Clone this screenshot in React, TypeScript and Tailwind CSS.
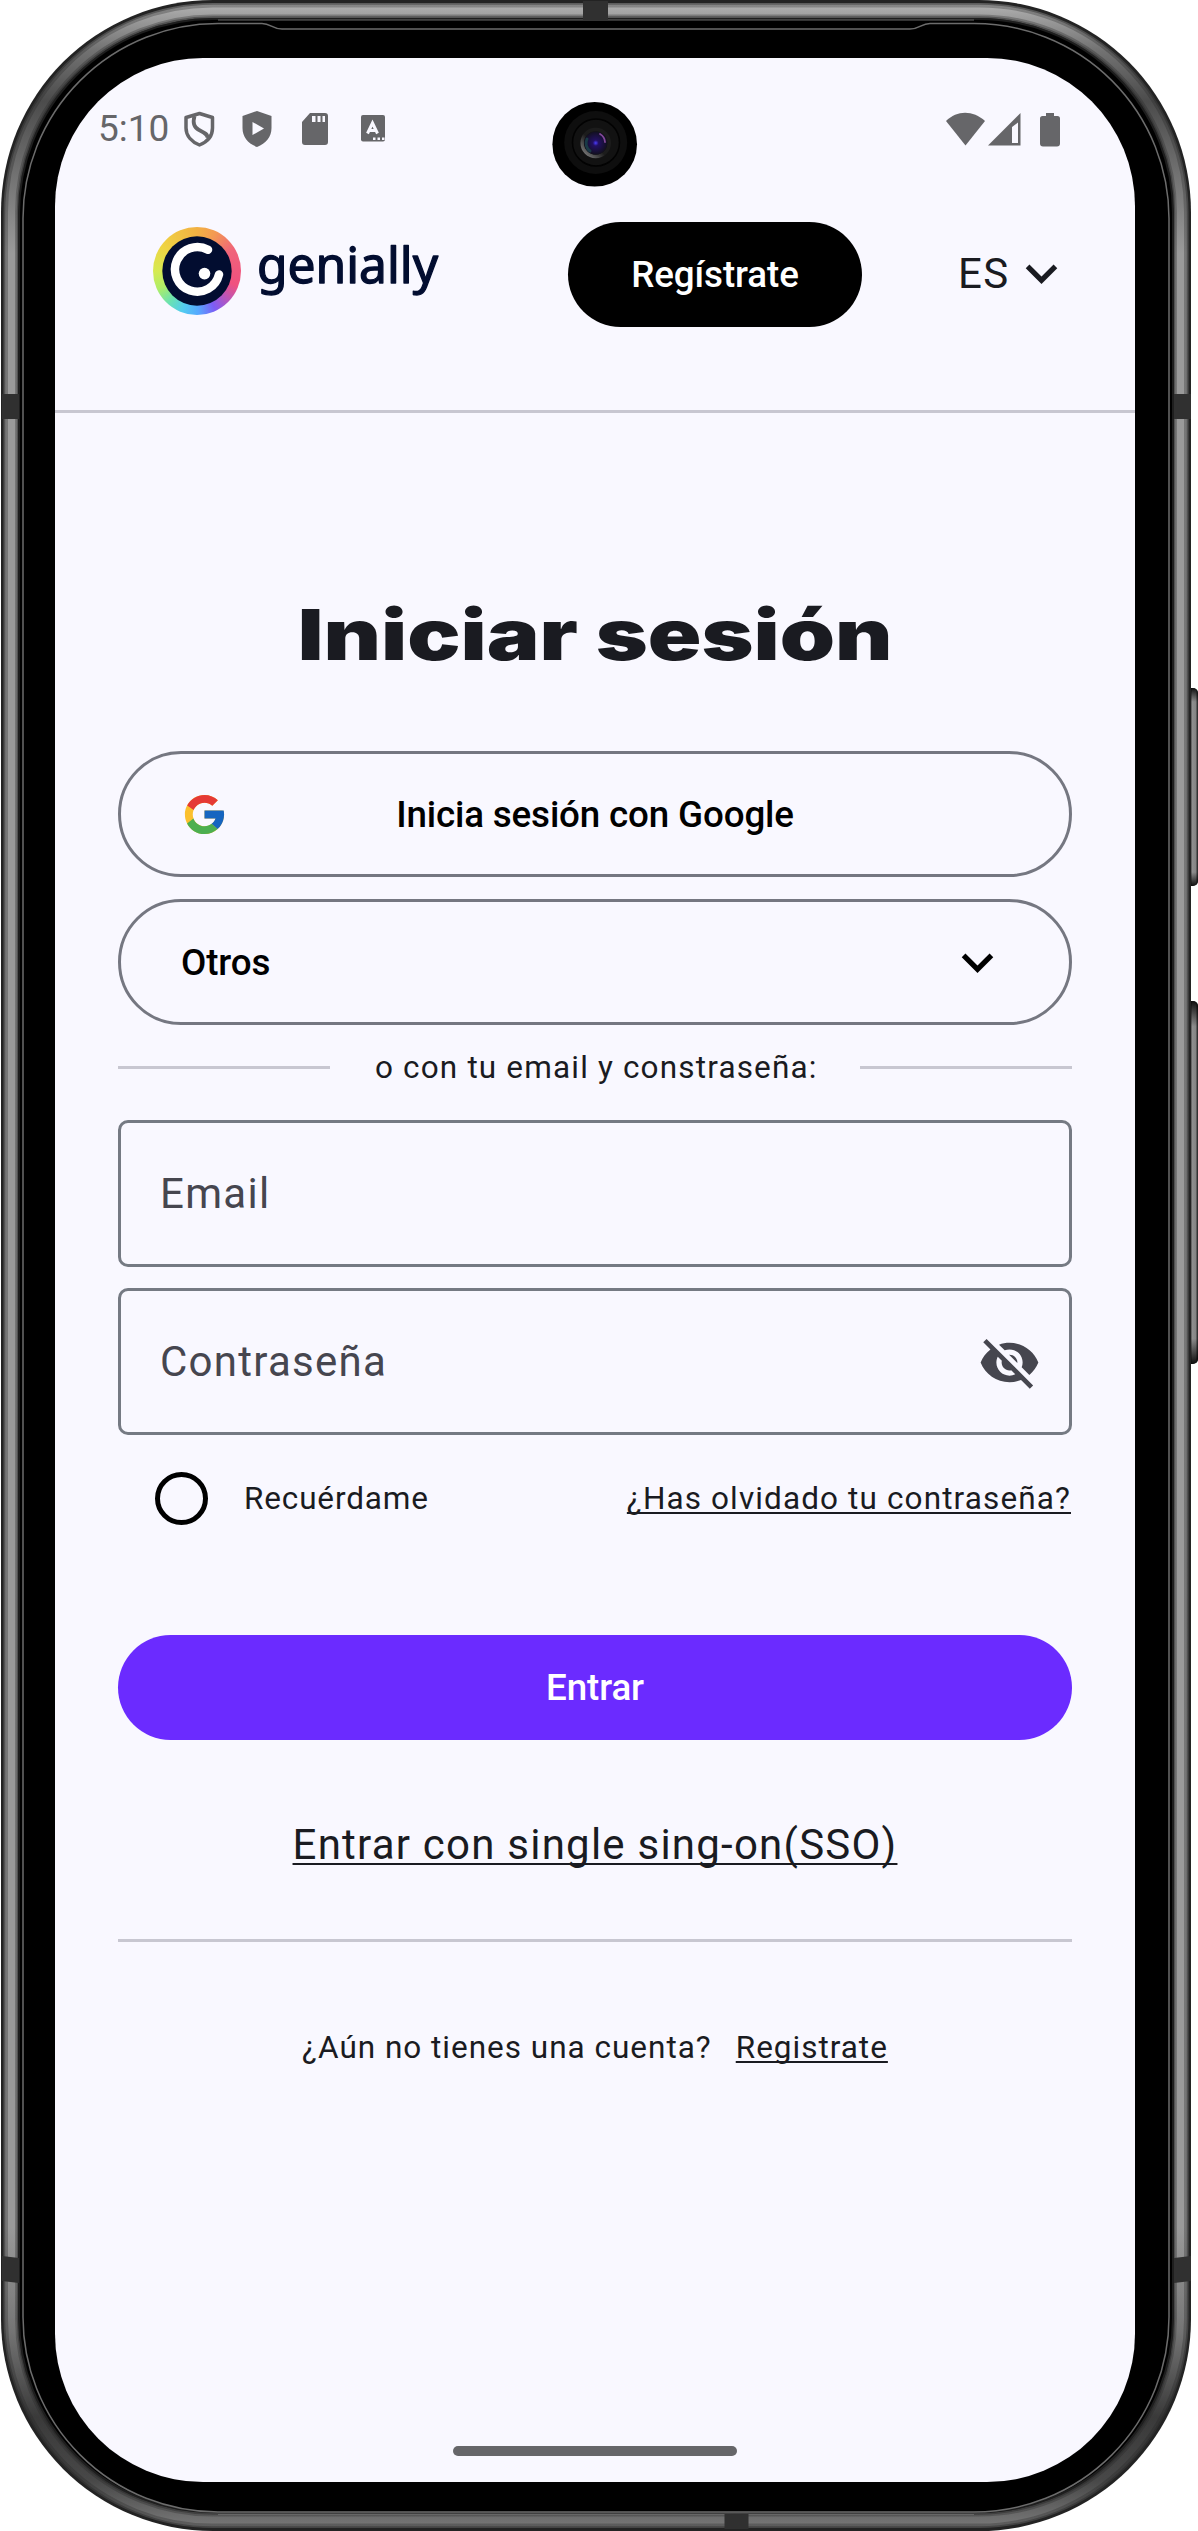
import React from "react";

/* Metallic phone body drawn behind the screen */
function DeviceFrame() {
  return (
    <svg className="absolute inset-0" width="1198" height="2531" viewBox="0 0 1198 2531" aria-hidden="true">
      <defs>
        <linearGradient id="metal" x1="0" y1="0" x2="0" y2="2531" gradientUnits="userSpaceOnUse">
          <stop offset="0" stopColor="#b8b8b8" />
          <stop offset="0.006" stopColor="#a0a0a0" />
          <stop offset="0.02" stopColor="#727272" />
          <stop offset="0.04" stopColor="#4c4c4c" />
          <stop offset="0.065" stopColor="#6c6c6c" />
          <stop offset="0.1" stopColor="#9a9a9a" />
          <stop offset="0.88" stopColor="#9a9a9a" />
          <stop offset="0.92" stopColor="#767676" />
          <stop offset="0.955" stopColor="#3a3a3a" />
          <stop offset="0.98" stopColor="#484848" />
          <stop offset="1" stopColor="#7c7c7c" />
        </linearGradient>
        <linearGradient id="key" x1="1190" y1="0" x2="1198" y2="0" gradientUnits="userSpaceOnUse">
          <stop offset="0" stopColor="#222" />
          <stop offset="0.3" stopColor="#8f8f8f" />
          <stop offset="0.7" stopColor="#858585" />
          <stop offset="1" stopColor="#1c1c1c" />
        </linearGradient>
        <linearGradient id="keyEnds" x1="0" y1="0" x2="0" y2="1">
          <stop offset="0" stopColor="#000" stopOpacity="0.9" />
          <stop offset="0.07" stopColor="#000" stopOpacity="0" />
          <stop offset="0.93" stopColor="#000" stopOpacity="0" />
          <stop offset="1" stopColor="#000" stopOpacity="0.9" />
        </linearGradient>
        <radialGradient id="lens">
          <stop offset="0" stopColor="#4a3cff" />
          <stop offset="0.25" stopColor="#231064" />
          <stop offset="1" stopColor="#12101f" />
        </radialGradient>
        <linearGradient id="lensRim" x1="0" y1="1" x2="1" y2="0">
          <stop offset="0" stopColor="#8a8a8a" />
          <stop offset="0.45" stopColor="#1c1c1c" />
          <stop offset="1" stopColor="#1c1c1c" />
        </linearGradient>
      </defs>
      <rect x="1180" y="688" width="18" height="198" rx="5" fill="url(#key)" />
      <rect x="1180" y="688" width="18" height="198" rx="5" fill="url(#keyEnds)" />
      <rect x="1180" y="1001" width="18" height="363" rx="5" fill="url(#key)" />
      <rect x="1180" y="1001" width="18" height="363" rx="5" fill="url(#keyEnds)" />
      <rect x="1" y="0" width="1190" height="2531" rx="212" fill="#232323" />
      <rect x="11" y="10.500" width="1170" height="2510" rx="202" fill="none" stroke="url(#metal)" strokeOpacity="0.4" strokeWidth="15" />
      <rect x="11" y="10.500" width="1170" height="2510" rx="202" fill="none" stroke="url(#metal)" strokeOpacity="0.5" strokeWidth="11.500" />
      <rect x="11.500" y="11" width="1169" height="2509" rx="201" fill="none" stroke="url(#metal)" strokeWidth="7" />
      <rect x="19" y="19" width="1154" height="2493" rx="194" fill="#000" stroke="#1e1e1e" strokeWidth="2" />
      <path
        d="M218 23.500H262C271 23.500 272 29 282 29H910C920 29 921 23.500 930 23.500H974A195 195 0 0 1 1169 218.500V2317A195 195 0 0 1 974 2512H218A195 195 0 0 1 23 2317V218.500A195 195 0 0 1 218 23.500Z"
        fill="#000"
        stroke="#6c6c6c"
        strokeWidth="1.500"
      />
      <path d="M218 20H974M218 2514.500H974" stroke="#666" strokeWidth="1.200" />
      <g fill="#303030">
        <rect x="2" y="394" width="17" height="25" />
        <rect x="1174" y="394" width="17" height="25" />
        <path d="M2 2256L19 2258V2283L2 2281ZM1191 2256L1174 2258V2283L1191 2281Z" />
        <rect x="583" y="1" width="25" height="19" />
        <rect x="724.500" y="2514" width="24" height="15" />
      </g>
      <rect x="55" y="58" width="1080" height="2424" rx="148" fill="#f9f8ff" />
      <circle cx="594.700" cy="144.300" r="42.300" fill="#000" />
      <circle cx="595.700" cy="142.500" r="31.500" fill="#0e0e0e" />
      <circle cx="596" cy="142.500" r="23.500" fill="#121212" stroke="#020202" strokeWidth="1.500" />
      <circle cx="595.700" cy="143" r="13.500" fill="none" stroke="url(#lensRim)" strokeWidth="3.500" />
      <circle cx="595.700" cy="143" r="11.500" fill="url(#lens)" />
      <path d="M600 134a10 10 0 0 1 5 8" fill="none" stroke="#84489a" strokeWidth="1.800" strokeLinecap="round" />
      <path d="M587 139a10 10 0 0 0 3 12" fill="none" stroke="#1a3a46" strokeWidth="3" strokeLinecap="round" />
    </svg>
  );
}

function StatusBar() {
  return (
    <div className="flex h-[142px] items-center pr-[75px] pb-[1px] pl-[43px] text-[#666669]">
      <span className="w-[70px] text-[37px] leading-none whitespace-nowrap">5:10</span>
      <svg className="ml-[14px]" width="35" height="38" viewBox="0 0 35 38" fill="none" stroke="currentColor" strokeWidth="3.500" strokeLinejoin="round">
        <path d="M17.500 3.500L30.500 7.500V18C30.500 26 25 32 17.500 35C10 32 4 26 4 18V7.500Z" />
        <path d="M12.500 6C10.500 13 12 17.500 17 20C22 22.500 26 24 25.500 28" strokeWidth="3.800" />
      </svg>
      <svg className="ml-[23px]" width="34" height="38" viewBox="0 0 34 38" fill="currentColor">
        <path fillRule="evenodd" d="M17 1L31.500 6V18C31.500 27 26 33.500 17 37C8 33.500 2.500 27 2.500 18V6ZM12.500 12V25L24 18.500Z" />
      </svg>
      <svg className="ml-[24px]" width="34" height="38" viewBox="0 0 34 38" fill="currentColor">
        <path fillRule="evenodd" d="M12 3H27Q30 3 30 6V32Q30 35 27 35H7Q4 35 4 32V12ZM14 6V12H17.500V6ZM19.500 6V12H22.500V6ZM24.500 6V12H27V6Z" />
      </svg>
      <svg className="ml-[28px]" width="28" height="30" viewBox="0 0 28 30">
        <rect x="1" y="1" width="24" height="26.500" rx="2" fill="currentColor" />
        <path d="M7.500 19.500L12.500 9L17.500 19.500M9.500 16.500H15.500" stroke="#f9f8ff" strokeWidth="3" fill="none" />
        <g fill="#f9f8ff">
          <rect x="13" y="23.500" width="2.500" height="2.500" />
          <rect x="17.500" y="23.500" width="2.500" height="2.500" />
          <rect x="22" y="23.500" width="2.500" height="2.500" />
        </g>
      </svg>
      <svg className="ml-auto" width="116" height="38" viewBox="0 0 116 38" fill="currentColor">
        <path d="M2 11C13 0 29 0 41 11L21.500 35.500Z" />
        <path fillRule="evenodd" d="M76.500 3V35.500H44ZM74 12.500L68 17V33H74Z" />
        <path d="M102 3H110V6H113.500Q116 6 116 8.500V33.500Q116 36.500 113 36.500H99Q96 36.500 96 33.500V8.500Q96 6 98.500 6H102Z" />
      </svg>
    </div>
  );
}

function Logo() {
  return (
    <div className="flex items-center">
      <div className="flex size-[88px] items-center justify-center rounded-full bg-[conic-gradient(#f2b143_0deg,#f39a52_25deg,#f0637a_60deg,#f0507f_110deg,#b356c0_135deg,#7c5cf5_155deg,#56a8ff_178deg,#52ccf0_200deg,#6be2b0_222deg,#aeee68_245deg,#d6ea52_270deg,#efd443_305deg,#f2b143_360deg)]">
        <svg width="70" height="70" viewBox="0 0 70 70">
          <circle cx="35" cy="35" r="34.700" fill="#020d30" />
          <path d="M46 13.800A22.300 22.300 0 1 0 57 38.500" fill="none" stroke="#fff" strokeWidth="8.500" strokeLinecap="round" />
          <circle cx="42.500" cy="37.600" r="5.800" fill="#fff" />
        </svg>
      </div>
      <svg className="ml-[14px] overflow-visible" width="190" height="88" viewBox="0 0 190 88">
        <text x="2" y="55.500" textLength="181" lengthAdjust="spacingAndGlyphs" fontSize="49" fill="#020d30" stroke="#020d30" strokeWidth="1.300" strokeLinejoin="round" className="font-['Noto_Sans',sans-serif] font-normal">
          genially
        </text>
      </svg>
    </div>
  );
}

function Chevron() {
  return (
    <svg width="63" height="63" viewBox="0 0 24 24" fill="currentColor">
      <path d="M7.410 8.590L12 13.170l4.590-4.580L18 10l-6 6-6-6z" />
    </svg>
  );
}

function GoogleIcon() {
  return (
    <svg width="47" height="47" viewBox="0 0 48 48">
      <path fill="#FBC02D" d="M43.611,20.083H42V20H24v8h11.303c-1.649,4.657-6.08,8-11.303,8c-6.627,0-12-5.373-12-12s5.373-12,12-12c3.059,0,5.842,1.154,7.961,3.039l5.657-5.657C34.046,6.053,29.268,4,24,4C12.955,4,4,12.955,4,24s8.955,20,20,20s20-8.955,20-20C44,22.659,43.862,21.35,43.611,20.083z" />
      <path fill="#E53935" d="M6.306,14.691l6.571,4.819C14.655,15.108,18.961,12,24,12c3.059,0,5.842,1.154,7.961,3.039l5.657-5.657C34.046,6.053,29.268,4,24,4C16.318,4,9.656,8.337,6.306,14.691z" />
      <path fill="#4CAF50" d="M24,44c5.166,0,9.86-1.977,13.409-5.192l-6.19-5.238C29.211,35.091,26.715,36,24,36c-5.202,0-9.619-3.317-11.283-7.946l-6.522,5.025C9.505,39.556,16.227,44,24,44z" />
      <path fill="#1565C0" d="M43.611,20.083L43.595,20L42,20H24v8h11.303c-0.792,2.237-2.231,4.166-4.087,5.571l0.003-0.002l6.19,5.238C36.971,39.205,44,34,44,24C44,22.659,43.862,21.35,43.611,20.083z" />
    </svg>
  );
}

function EyeOff() {
  return (
    <svg className="mt-[2px]" width="63" height="63" viewBox="0 0 24 24" fill="currentColor">
      <path d="M12 7c2.760 0 5 2.240 5 5 0 .65-.13 1.260-.36 1.830l2.920 2.920c1.510-1.260 2.700-2.890 3.430-4.750-1.730-4.390-6-7.500-11-7.500-1.400 0-2.740.25-3.980.7l2.160 2.160C10.740 7.130 11.350 7 12 7zM2 4.270l2.280 2.280.46.46C3.080 8.300 1.780 10.020 1 12c1.730 4.390 6 7.500 11 7.500 1.550 0 3.030-.3 4.380-.84l.42.42L19.730 22 21 20.730 3.270 3 2 4.270zM7.530 9.800l1.550 1.550c-.05.21-.08.43-.08.65 0 1.660 1.340 3 3 3 .22 0 .44-.03.65-.08l1.550 1.550c-.67.33-1.410.53-2.200.53-2.760 0-5-2.240-5-5 0-.79.2-1.530.53-2.200zm4.310-.78l3.150 3.150.02-.16c0-1.660-1.340-3-3-3l-.17.01z" />
    </svg>
  );
}

export default function App() {
  return (
    <div className="relative h-[2531px] w-[1198px] bg-white font-['Roboto',sans-serif] text-[#1a1b21]">
      <DeviceFrame />
      <div className="relative flex h-full flex-col pt-[58px] pr-[63px] pl-[55px]">
        <StatusBar />
        <header className="flex h-[213px] items-start border-b-[3px] border-[#c8c7d1] pl-[98px]">
          <div className="mt-[27px]">
            <Logo />
          </div>
          <button className="mt-[22px] ml-[123px] h-[105px] w-[294px] rounded-full bg-black pt-[1px] text-[36.750px] font-medium tracking-[-0.1px] text-white">
            Regístrate
          </button>
          <div className="mt-[42px] ml-[96px] flex items-center">
            <span className="w-[52px] text-[42px] leading-[63px] tracking-[1.3px]">ES</span>
            <Chevron />
          </div>
        </header>

        <main className="flex flex-col px-[63px]">
          <h1 className="mt-[173px] flex h-[96px] items-center justify-center font-['Inter',sans-serif] text-[70px] font-black whitespace-nowrap">
            <span className="inline-block scale-x-[1.265]">Iniciar sesión</span>
          </h1>

          <button className="mt-[69px] flex h-[126px] items-center rounded-full border-[3px] border-[#757781] pl-[60px] text-[36.750px] font-medium tracking-[-0.150px] text-black">
            <GoogleIcon />
            <span className="flex-1 pt-[2px] pr-[107px] text-center">Inicia sesión con Google</span>
          </button>
          <button className="mt-[22px] flex h-[126px] items-center justify-between rounded-full border-[3px] border-[#757781] pr-[60px] pl-[60px] text-[36.750px] font-medium tracking-[-0.1px] text-black">
            <span className="pt-[2px]">Otros</span>
            <Chevron />
          </button>

          <div className="mt-[21px] flex h-[43px] items-center text-[31.500px] tracking-[1.160px]">
            <div className="h-[3px] w-[212px] bg-[#c8c7d1]" />
            <span className="flex-1 pl-[45px] whitespace-nowrap">o con tu email y constraseña:</span>
            <div className="h-[3px] w-[212px] bg-[#c8c7d1]" />
          </div>

          <div className="mt-[31px] flex h-[147px] items-center rounded-[10px] border-[3px] border-[#757a83] pl-[39px] text-[42px] tracking-[1.310px] text-[#46464f]">
            Email
          </div>
          <div className="mt-[21px] flex h-[147px] items-center justify-between rounded-[10px] border-[3px] border-[#757a83] pr-[28px] pl-[39px] text-[42px] tracking-[1.250px] text-[#46464f]">
            <span>Contraseña</span>
            <EyeOff />
          </div>

          <div className="mt-[37px] flex h-[53px] items-center pl-[37px] text-[31.500px]">
            <span className="size-[53px] rounded-full border-[5px] border-black" />
            <span className="ml-[36px] tracking-[0.850px]">Recuérdame</span>
            <a className="mr-[1px] ml-auto tracking-[1.120px] underline decoration-2 underline-offset-[3px] [text-decoration-skip-ink:none]">¿Has olvidado tu contraseña?</a>
          </div>

          <button className="mt-[110px] h-[105px] rounded-full bg-[#6b2bff] text-[36.750px] font-medium tracking-[-0.1px] text-white">
            Entrar
          </button>

          <div className="mt-[73px] flex h-[63px] items-center justify-center text-[42px] tracking-[1.230px]">
            <a className="underline decoration-2 underline-offset-[4px] [text-decoration-skip-ink:none]">Entrar con single sing-on(SSO)</a>
          </div>
          <div className="mt-[63px] h-[3px] bg-[#c8c7d1]" />
          <div className="mt-[85px] flex h-[42px] items-center justify-center gap-[24px] text-[31.500px] tracking-[0.990px]">
            <span>¿Aún no tienes una cuenta?</span>
            <a className="underline decoration-2 underline-offset-[3px] [text-decoration-skip-ink:none]">Registrate</a>
          </div>
        </main>
        <div className="mt-auto mb-[75px] h-[10px] w-[284px] self-center rounded-full bg-[#666669]" />
      </div>
    </div>
  );
}
